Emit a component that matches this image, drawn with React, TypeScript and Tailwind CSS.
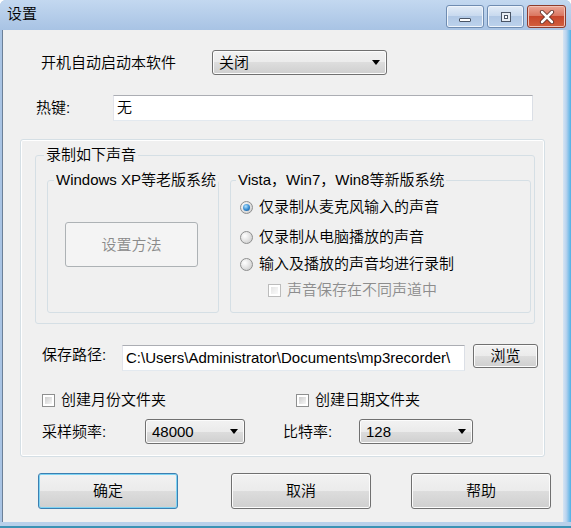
import React from 'react';

const font = "font-['Liberation_Sans','Noto_Sans_CJK_SC',sans-serif] font-[350]";

const btnFace =
  'rounded-[3px] border bg-[linear-gradient(to_bottom,#f2f2f2_0%,#ebebeb_50%,#dddddd_50%,#cfcfcf_100%)] text-[15px] leading-[18px] text-black';

function Combo({ value, className }: { value: string; className: string }) {
  return (
    <div
      className={`${btnFace} border-[#707070] shadow-[inset_0_0_0_1px_#fcfcfc] flex h-[25px] items-center justify-between pl-[6px] pr-[6px] ${className}`}
    >
      <span>{value}</span>
      <svg width="8" height="5" viewBox="0 0 8 5">
        <path d="M0 0h8L4 5z" fill="#000" />
      </svg>
    </div>
  );
}

function Radio({ checked }: { checked?: boolean }) {
  return (
    <span className="flex h-[13px] w-[13px] shrink-0 items-center justify-center rounded-full border border-[#8e8f8f] bg-[radial-gradient(circle_at_35%_35%,#ffffff,#e3e3e3_50%,#c4c4c4)]">
      {checked && (
        <span className="block h-[7px] w-[7px] rounded-full bg-[radial-gradient(circle_at_40%_35%,#b4e2fc,#3a8fd4_50%,#0e4b87)]" />
      )}
    </span>
  );
}

function Check({ disabled }: { disabled?: boolean }) {
  return (
    <span
      className={`block h-[13px] w-[13px] shrink-0 border bg-white p-[2px] ${
        disabled ? 'border-[#bcbcbc]' : 'border-[#8e8f8f]'
      }`}
    >
      <span
        className={`block h-full w-full ${
          disabled
            ? 'bg-[linear-gradient(135deg,#e4e4e4,#fafafa)]'
            : 'bg-[linear-gradient(135deg,#cdcdcd,#f6f6f6)]'
        }`}
      />
    </span>
  );
}

function Group({
  title,
  className,
  legendClass,
  children,
}: {
  title?: string;
  className: string;
  legendClass: string;
  children?: React.ReactNode;
}) {
  return (
    <fieldset className={`rounded-[3px] border border-[#d5dfe5] ${className}`}>
      <legend className={`whitespace-nowrap px-[2px] text-[15px] leading-[18px] text-black ${legendClass}`}>
        {title}
      </legend>
      {children}
    </fieldset>
  );
}

function TitleButtons() {
  return (
    <div className="mt-[5px] flex gap-[3px] self-start">
      <div className="flex h-[23px] w-[38px] items-end justify-center rounded-[3px] border border-[#6f8cb1] bg-[linear-gradient(to_bottom,#e3ecf7,#c6d8ee_50%,#b1c8e5_50%,#bcd2ec)] pb-[5px] shadow-[inset_0_0_0_1px_#eef4fb]">
        <span className="block h-[4px] w-[12px] rounded-[1px] border border-[#4a5566] bg-white" />
      </div>
      <div className="flex h-[23px] w-[37px] items-center justify-center rounded-[3px] border border-[#6f8cb1] bg-[linear-gradient(to_bottom,#e3ecf7,#c6d8ee_50%,#b1c8e5_50%,#bcd2ec)] shadow-[inset_0_0_0_1px_#eef4fb]">
        <span className="flex h-[10px] w-[10px] items-center justify-center border border-[#4a5566] bg-[#e8eef5]">
          <span className="block h-[4px] w-[4px] border border-[#4a5566] bg-white" />
        </span>
      </div>
      <div className="flex h-[23px] w-[39px] items-center justify-center rounded-[3px] border border-[#8d3b2c] bg-[linear-gradient(to_bottom,#eba596,#d9735d_50%,#c7452b_50%,#d2603f)] shadow-[inset_0_0_0_1px_#f2c2b6]">
        <svg width="16" height="14" viewBox="0 0 16 14">
          <path d="M3 2l10 10M13 2L3 12" stroke="#5a2a22" strokeWidth="4.2" strokeLinecap="round" />
          <path d="M3 2l10 10M13 2L3 12" stroke="#ffffff" strokeWidth="2.6" strokeLinecap="round" />
        </svg>
      </div>
    </div>
  );
}

export default function App() {
  return (
    <div className={`flex h-[528px] w-[571px] flex-col overflow-hidden rounded-t-[6px] bg-[#a9c4e4] ${font}`}>
      <div className="flex h-[30px] shrink-0 items-center justify-between bg-[linear-gradient(to_bottom,#c3d8f0,#a8c3e4)] pl-[7px] pr-[5px]">
        <span className="mt-[-2px] text-[15px] leading-[18px] text-black">设置</span>
        <TitleButtons />
      </div>

      <div className="flex h-[492px]">
        <div className="w-[2px] bg-[#a9c4e4]" />
        <div className="flex h-full w-[561px] flex-col border-l border-[#6c8098] bg-[#f0f0f0] text-[15px] leading-[18px] text-black">
          <div className="mt-[20px] flex h-[25px] items-center">
            <span className="ml-[38px] w-[171px]">开机自动启动本软件</span>
            <Combo value="关闭" className="w-[175px]" />
          </div>

          <div className="mt-[20px] flex h-[26px] items-center">
            <span className="ml-[33px] w-[77px]">热键:</span>
            <div className="flex h-[26px] w-[420px] items-center border border-[#abadb3] border-b-[#e3e9ef] border-l-[#e2e3ea] border-r-[#dbdfe6] bg-white px-[3px]">
              无
            </div>
          </div>

          <div className="mt-[18px] ml-[17px] flex h-[318px] w-[525px] flex-col rounded-[3px] border border-[#d5dfe5] shadow-[inset_0_0_0_1px_#ffffff]">
            <Group
              title="录制如下声音"
              className="mt-[6px] ml-[14px] h-[178px] w-[500px]"
              legendClass="ml-[8px]"
            >
              <div className="flex">
                <Group
                  title="Windows XP等老版系统"
                  className="mt-[7px] ml-[11px] h-[142px] w-[171px]"
                  legendClass="ml-[6px]"
                >
                  <div className="mt-[33px] ml-[17px] flex h-[45px] w-[133px] items-center justify-center rounded-[3px] border border-[#adb2b5] bg-[#f4f4f4] text-[#8a8a8a]">
                    设置方法
                  </div>
                </Group>
                <Group
                  title="Vista，Win7，Win8等新版系统"
                  className="mt-[7px] ml-[11px] h-[142px] w-[301px]"
                  legendClass="ml-[5px]"
                >
                  <div className="mt-[8px] flex h-[20px] items-center gap-[6px] pl-[9px]">
                    <Radio checked />
                    <span>仅录制从麦克风输入的声音</span>
                  </div>
                  <div className="mt-[10px] flex h-[20px] items-center gap-[6px] pl-[9px]">
                    <Radio />
                    <span>仅录制从电脑播放的声音</span>
                  </div>
                  <div className="mt-[7px] flex h-[20px] items-center gap-[6px] pl-[9px]">
                    <Radio />
                    <span>输入及播放的声音均进行录制</span>
                  </div>
                  <div className="mt-[6px] flex h-[20px] items-center gap-[6px] pl-[37px]">
                    <Check disabled />
                    <span className="text-[#8d8d8d]">声音保存在不同声道中</span>
                  </div>
                </Group>
              </div>
            </Group>

            <div className="mt-[20px] flex h-[27px] items-start">
              <span className="mt-[2px] ml-[21px] w-[80px]">保存路径:</span>
              <div className="mt-[1px] flex h-[26px] w-[343px] items-center border border-[#abadb3] border-b-[#e3e9ef] border-l-[#e2e3ea] border-r-[#dbdfe6] bg-white pl-[3px]">
                C:\Users\Administrator\Documents\mp3recorder\
              </div>
              <div
                className={`${btnFace} ml-[8px] flex h-[24px] w-[65px] items-center justify-center border-[#707070] shadow-[inset_0_0_0_1px_#fcfcfc]`}
              >
                浏览
              </div>
            </div>

            <div className="mt-[19px] flex h-[20px] items-center">
              <div className="ml-[21px] flex w-[254px] items-center gap-[6px]">
                <Check />
                <span>创建月份文件夹</span>
              </div>
              <div className="flex items-center gap-[6px]">
                <Check />
                <span>创建日期文件夹</span>
              </div>
            </div>

            <div className="mt-[9px] flex h-[25px] items-center">
              <span className="ml-[21px] w-[103px]">采样频率:</span>
              <Combo value="48000" className="w-[100px]" />
              <span className="ml-[38px] w-[76px]">比特率:</span>
              <Combo value="128" className="w-[114px]" />
            </div>
          </div>

          <div className="mt-[16px] flex h-[36px]">
            <div
              className={`${btnFace} ml-[35px] flex w-[140px] items-center justify-center border-[#3c7fb1] shadow-[inset_0_0_0_1px_#7ed3f3]`}
            >
              确定
            </div>
            <div
              className={`${btnFace} ml-[53px] flex w-[140px] items-center justify-center border-[#707070] shadow-[inset_0_0_0_1px_#fcfcfc]`}
            >
              取消
            </div>
            <div
              className={`${btnFace} ml-[40px] flex w-[140px] items-center justify-center border-[#707070] shadow-[inset_0_0_0_1px_#fcfcfc]`}
            >
              帮助
            </div>
          </div>
        </div>
        <div className="w-[8px] bg-[linear-gradient(to_right,#d6e5f4,#b9d3ee_40%,#4fb0e6)]" />
      </div>

      <div className="h-[6px] border-b-[2px] border-[#3c92b4] bg-[#b8d0ea]" />
    </div>
  );
}
